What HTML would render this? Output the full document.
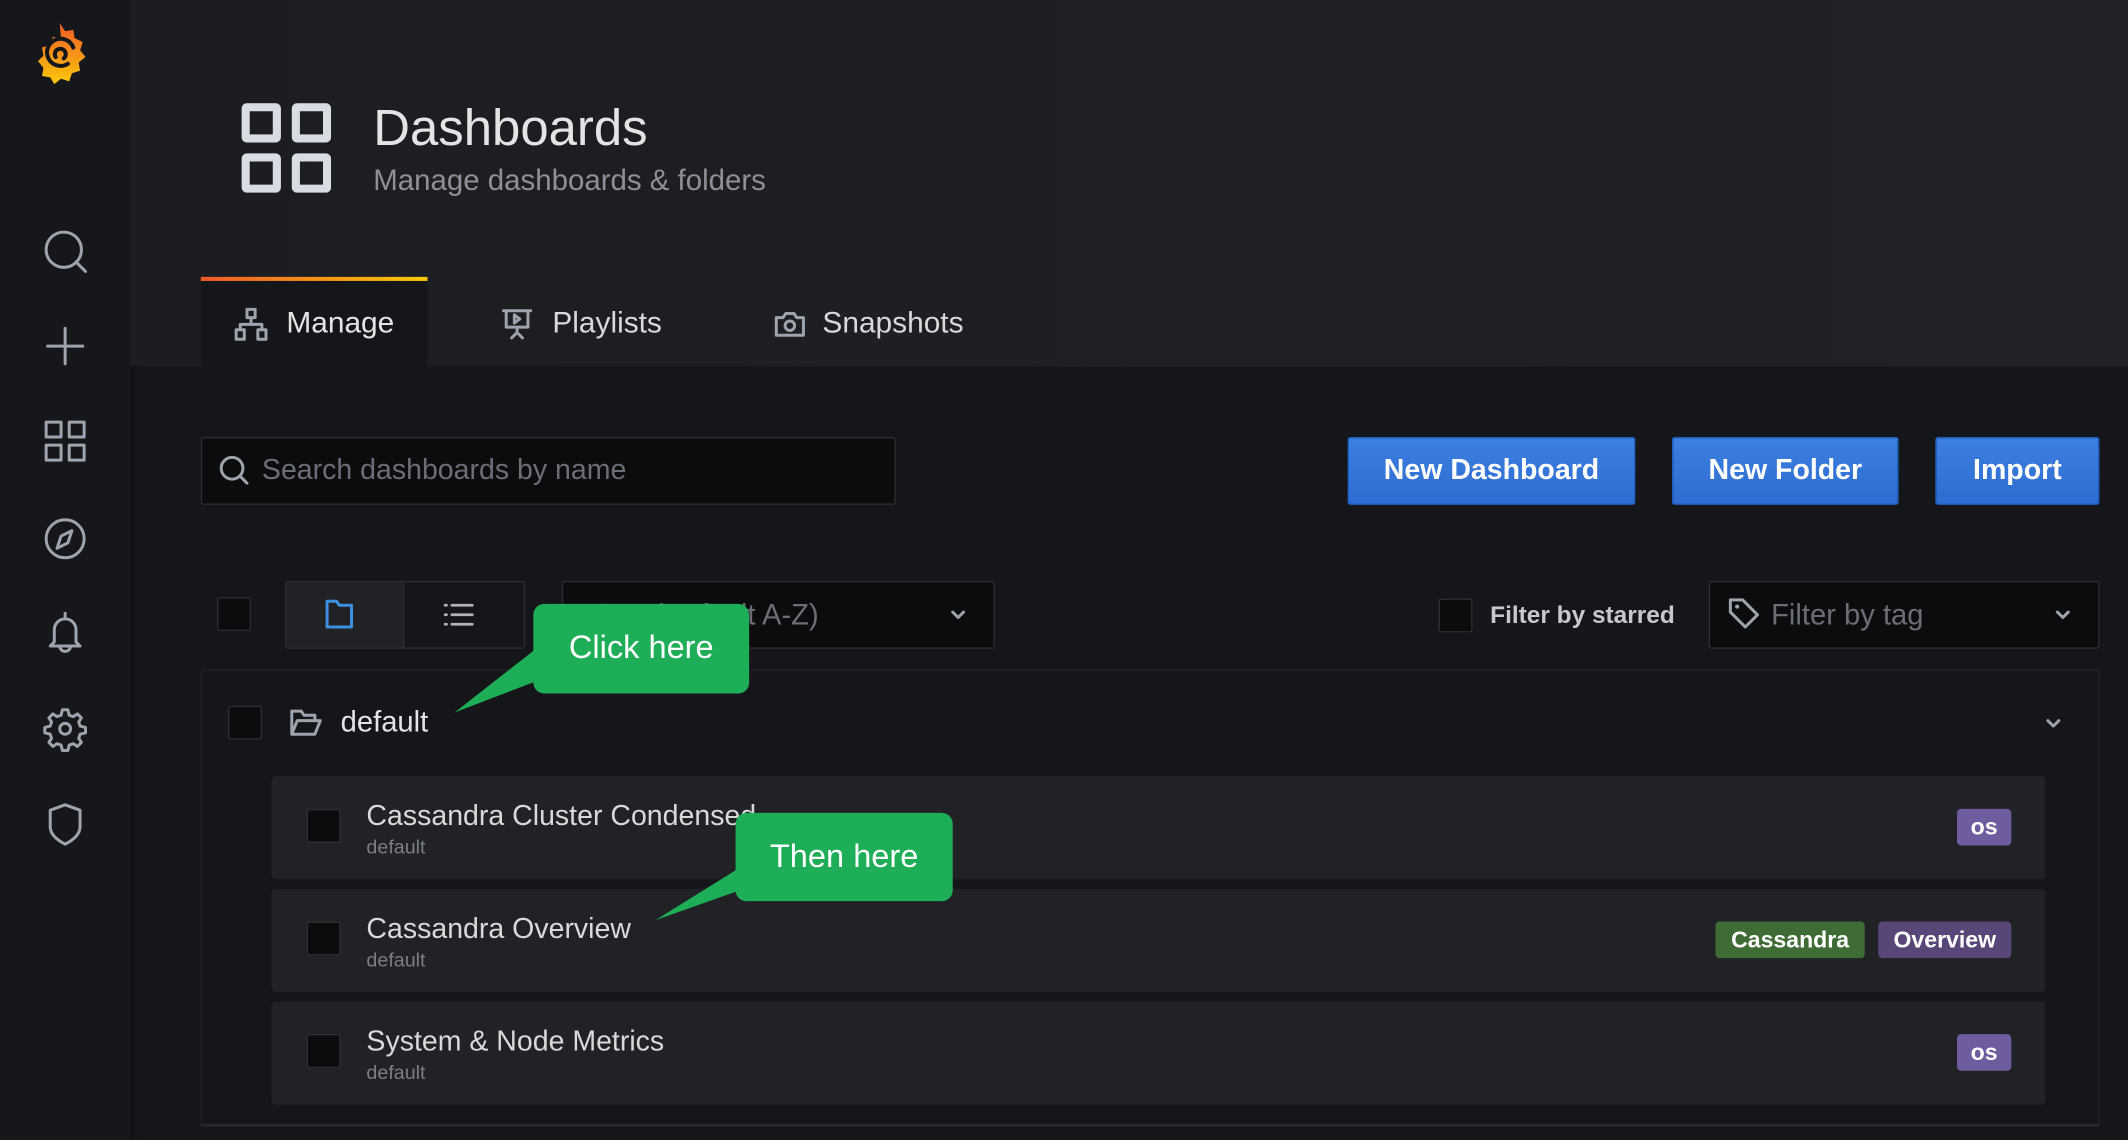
<!DOCTYPE html>
<html><head><meta charset="utf-8"><style>
*{box-sizing:border-box;margin:0;padding:0}
html,body{width:2128px;height:1140px;overflow:hidden;background:#141619}
#s{position:absolute;left:0;top:0;width:1568px;height:840px;transform:scale(1.3571428);transform-origin:0 0;font-family:"Liberation Sans",sans-serif;background:#141619;color:#d8d9da}
.a{position:absolute}
.side{left:0;top:0;width:96px;height:840px;background:#16171b;box-shadow:2px 0 6px rgba(0,0,0,.3)}
.hdr{left:96px;top:0;width:1472px;height:270px;background:linear-gradient(90deg,#1c1d21,#202226)}
.ic{stroke:#9fa3ad;fill:none;stroke-width:2.2;stroke-linecap:round;stroke-linejoin:round}
.cb{width:25px;height:25px;background:#0b0c0e;border:1px solid #2c2e33;border-radius:2px}
.btn{top:322px;height:50px;background:linear-gradient(#3c80e0,#2d6cd0);border:1px solid #1f60c4;border-radius:2px;color:#fff;font-size:21px;font-weight:bold;text-align:center;line-height:48px}
.inp{background:#0b0c0e;border:1px solid #2c2e33;border-radius:2px}
.row{left:200px;width:1307px;height:76px;background:#202226;border-radius:3px}
.t1{left:70px;top:18px;font-size:21px;color:#d8d9da}
.t2{left:70px;top:45px;font-size:14.5px;color:#7b7e85}
.tag{top:24px;height:27px;border-radius:3px;color:#fff;font-size:17px;font-weight:bold;line-height:27px;text-align:center}
.call{background:#1eae57;border-radius:8px;color:#fff;font-size:24px;text-align:center}
</style></head><body><div id="s">
<div class="a side"></div>
<svg class="a" style="left:20px;top:14px" width="50" height="52" viewBox="0 0 50 52">
<defs><linearGradient id="g" x1="0" y1="0" x2="0" y2="1"><stop offset="0" stop-color="#f05a28"/><stop offset="1" stop-color="#fbca0a"/></linearGradient></defs>
<path d="M24 3l4 6 6-1 1 6 6 3-2 6 4 5-5 4 1 6-6 2-2 6-6-2-5 4-3-5-6-1 1-6-4-5 4-4-1-6 6-2 2-6 6 2z" fill="url(#g)"/>
<path d="M30 33a10 10 0 1 1 4-12" stroke="#16171b" stroke-width="3" fill="none" stroke-linecap="round"/>
<path d="M21 28a4 4 0 1 1 6 1" stroke="#16171b" stroke-width="3" fill="none" stroke-linecap="round"/>
</svg>
<svg class="a" style="left:30px;top:167px" width="36" height="36" viewBox="0 0 36 36"><circle class="ic" cx="17" cy="17" r="13"/><path class="ic" d="M26 26l7 7"/></svg>
<svg class="a" style="left:30px;top:237px" width="36" height="36" viewBox="0 0 36 36"><path class="ic" d="M18 5v26M5 18h26"/></svg>
<svg class="a" style="left:30px;top:307px" width="36" height="36" viewBox="0 0 36 36"><rect class="ic" x="4" y="4" width="11" height="11"/><rect class="ic" x="21" y="4" width="11" height="11"/><rect class="ic" x="4" y="21" width="11" height="11"/><rect class="ic" x="21" y="21" width="11" height="11"/></svg>
<svg class="a" style="left:30px;top:379px" width="36" height="36" viewBox="0 0 36 36"><circle class="ic" cx="18" cy="18" r="14"/><path class="ic" d="M23 12l-3 9-8 4 3-9z"/></svg>
<svg class="a" style="left:30px;top:449px" width="36" height="36" viewBox="0 0 36 36"><path class="ic" d="M18 3v3M10 24V15a8 8 0 0 1 16 0v9l3 3H7zM14 27a4 4 0 0 0 8 0"/></svg>
<svg class="a" style="left:30px;top:519px" width="36" height="36" viewBox="0 0 36 36"><path class="ic" d="M16 4h4l1 4 3 1 3-2 3 3-2 3 1 3 4 1v4l-4 1-1 3 2 3-3 3-3-2-3 1-1 4h-4l-1-4-3-1-3 2-3-3 2-3-1-3-4-1v-4l4-1 1-3-2-3 3-3 3 2 3-1z"/><circle class="ic" cx="18" cy="18" r="4"/></svg>
<svg class="a" style="left:30px;top:589px" width="36" height="36" viewBox="0 0 36 36"><path class="ic" d="M18 4l-11 4v12c0 6 5 10 11 13 6-3 11-7 11-13V8z"/></svg>

<div class="a hdr"></div>
<svg class="a" style="left:178px;top:76px" width="66" height="66" viewBox="0 0 66 66"><g fill="none" stroke="#d8dce3" stroke-width="6"><rect x="3" y="3" width="23" height="23" rx="1"/><rect x="40" y="3" width="23" height="23" rx="1"/><rect x="3" y="40" width="23" height="23" rx="1"/><rect x="40" y="40" width="23" height="23" rx="1"/></g></svg>
<div class="a" style="left:275px;top:73px;font-size:37.5px;color:#e3e4e6">Dashboards</div>
<div class="a" style="left:275px;top:120px;font-size:21.7px;color:#8e9097">Manage dashboards &amp; folders</div>

<div class="a" style="left:148px;top:204px;width:167px;height:66px;background:#141619;border-top:3px solid;border-image:linear-gradient(90deg,#f05a28,#fbca0a) 1"></div>
<svg class="a" style="left:172px;top:226px" width="26" height="26" viewBox="0 0 26 26"><g class="ic" stroke-width="1.8"><rect x="10" y="2" width="6" height="6"/><rect x="2" y="17" width="6" height="7"/><rect x="18" y="17" width="6" height="7"/><path d="M13 8v5M5 17v-4h16v4"/></g></svg>
<div class="a" style="left:211px;top:225px;font-size:22px;color:#e3e4e6">Manage</div>
<svg class="a" style="left:368px;top:226px" width="26" height="26" viewBox="0 0 26 26"><g class="ic" stroke-width="1.8"><path d="M3 3h20M5 3v12h16V3M13 15v4M9 23l4-4 4 4"/><path d="M11 6v6l4-3z"/></g></svg>
<div class="a" style="left:407px;top:225px;font-size:22px;color:#d8d9da">Playlists</div>
<svg class="a" style="left:569px;top:226px" width="26" height="26" viewBox="0 0 26 26"><g class="ic" stroke-width="1.8"><path d="M3 8h5l2-3h6l2 3h5v13H3z"/><circle cx="13" cy="14" r="3.5"/></g></svg>
<div class="a" style="left:606px;top:225px;font-size:22px;color:#d8d9da">Snapshots</div>

<div class="a inp" style="left:148px;top:322px;width:512px;height:50px"></div>
<svg class="a" style="left:160px;top:334px" width="26" height="26" viewBox="0 0 26 26"><circle class="ic" cx="11" cy="11" r="8" stroke-width="1.8"/><path class="ic" d="M17 17l5 5" stroke-width="1.8"/></svg>
<div class="a" style="left:193px;top:335px;font-size:21px;color:#6b6e75">Search dashboards by name</div>
<div class="a btn" style="left:993px;width:212px">New Dashboard</div>
<div class="a btn" style="left:1232px;width:167px">New Folder</div>
<div class="a btn" style="left:1426px;width:121px">Import</div>

<div class="a cb" style="left:160px;top:440px"></div>
<div class="a" style="left:210px;top:428px;width:177px;height:50px;border:1px solid #2c2e33;border-radius:2px;background:#141619"></div>
<div class="a" style="left:211px;top:429px;width:87px;height:48px;background:#202226;border-right:1px solid #2c2e33"></div>
<svg class="a" style="left:238px;top:440px" width="24" height="26" viewBox="0 0 24 26"><path d="M3 3h7l2 3h9v16H3z" fill="none" stroke="#3d8fe0" stroke-width="2.2" stroke-linejoin="round"/></svg>
<svg class="a" style="left:326px;top:442px" width="24" height="22" viewBox="0 0 24 22"><path d="M2 4h1M7 4h15M2 11h1M7 11h15M2 18h1M7 18h15" stroke="#b0b3ba" stroke-width="2" stroke-linecap="round"/></svg>
<div class="a inp" style="left:414px;top:428px;width:319px;height:50px"></div>
<div class="a" style="left:436px;top:441px;font-size:21.5px;color:#6b6e75">Sort (Default A-Z)</div>
<svg class="a" style="left:699px;top:446px" width="14" height="14" viewBox="0 0 14 14"><path class="ic" d="M3 5l4 4 4-4" stroke-width="1.8"/></svg>

<div class="a cb" style="left:1060px;top:441px"></div>
<div class="a" style="left:1098px;top:443px;font-size:18px;font-weight:bold;color:#c7c8cc">Filter by starred</div>
<div class="a inp" style="left:1259px;top:428px;width:288px;height:50px"></div>
<svg class="a" style="left:1272px;top:439px" width="26" height="26" viewBox="0 0 26 26"><path class="ic" d="M3 3h9l11 11-9 9L3 12z" stroke-width="1.8"/><circle cx="8" cy="8" r="1.5" fill="#9fa3ad"/></svg>
<div class="a" style="left:1305px;top:441px;font-size:21.5px;color:#6b6e75">Filter by tag</div>
<svg class="a" style="left:1513px;top:446px" width="14" height="14" viewBox="0 0 14 14"><path class="ic" d="M3 5l4 4 4-4" stroke-width="1.8"/></svg>

<div class="a" style="left:148px;top:493px;width:1399px;height:337px;border:1px solid #23252a;border-radius:3px;background:#141619"></div>
<div class="a" style="left:148px;top:828px;width:1399px;height:2px;background:#26282c"></div>
<div class="a cb" style="left:168px;top:520px"></div>
<svg class="a" style="left:212px;top:521px" width="26" height="24" viewBox="0 0 26 24"><path class="ic" stroke-width="1.8" d="M3 20V3h7l2 3h8v4M3 20l4-10h17l-4 10z"/></svg>
<div class="a" style="left:251px;top:520px;font-size:21.5px;color:#e3e4e6">default</div>
<svg class="a" style="left:1506px;top:526px" width="14" height="14" viewBox="0 0 14 14"><path class="ic" d="M3 5l4 4 4-4" stroke-width="1.8"/></svg>

<div class="a row" style="top:572px"><div class="a cb" style="left:26px;top:24px"></div><div class="a t1">Cassandra Cluster Condensed</div><div class="a t2">default</div><div class="a tag" style="left:1242px;width:40px;background:#6e5c9e">os</div></div>
<div class="a row" style="top:655px"><div class="a cb" style="left:26px;top:24px"></div><div class="a t1">Cassandra Overview</div><div class="a t2">default</div><div class="a tag" style="left:1064px;width:110px;background:#3f6b35">Cassandra</div><div class="a tag" style="left:1184px;width:98px;background:#574677">Overview</div></div>
<div class="a row" style="top:738px"><div class="a cb" style="left:26px;top:24px"></div><div class="a t1">System &amp; Node Metrics</div><div class="a t2">default</div><div class="a tag" style="left:1242px;width:40px;background:#6e5c9e">os</div></div>

<svg class="a" style="left:330px;top:440px" width="400" height="250" viewBox="330 440 400 250"><path d="M395 478L335 525L400 500z" fill="#1eae57"/><path d="M544 640L483 678L548 655z" fill="#1eae57"/></svg>
<div class="a call" style="left:393px;top:445px;width:159px;height:66px;line-height:66px">Click here</div>
<div class="a call" style="left:542px;top:599px;width:160px;height:65px;line-height:65px">Then here</div>
</div></body></html>
